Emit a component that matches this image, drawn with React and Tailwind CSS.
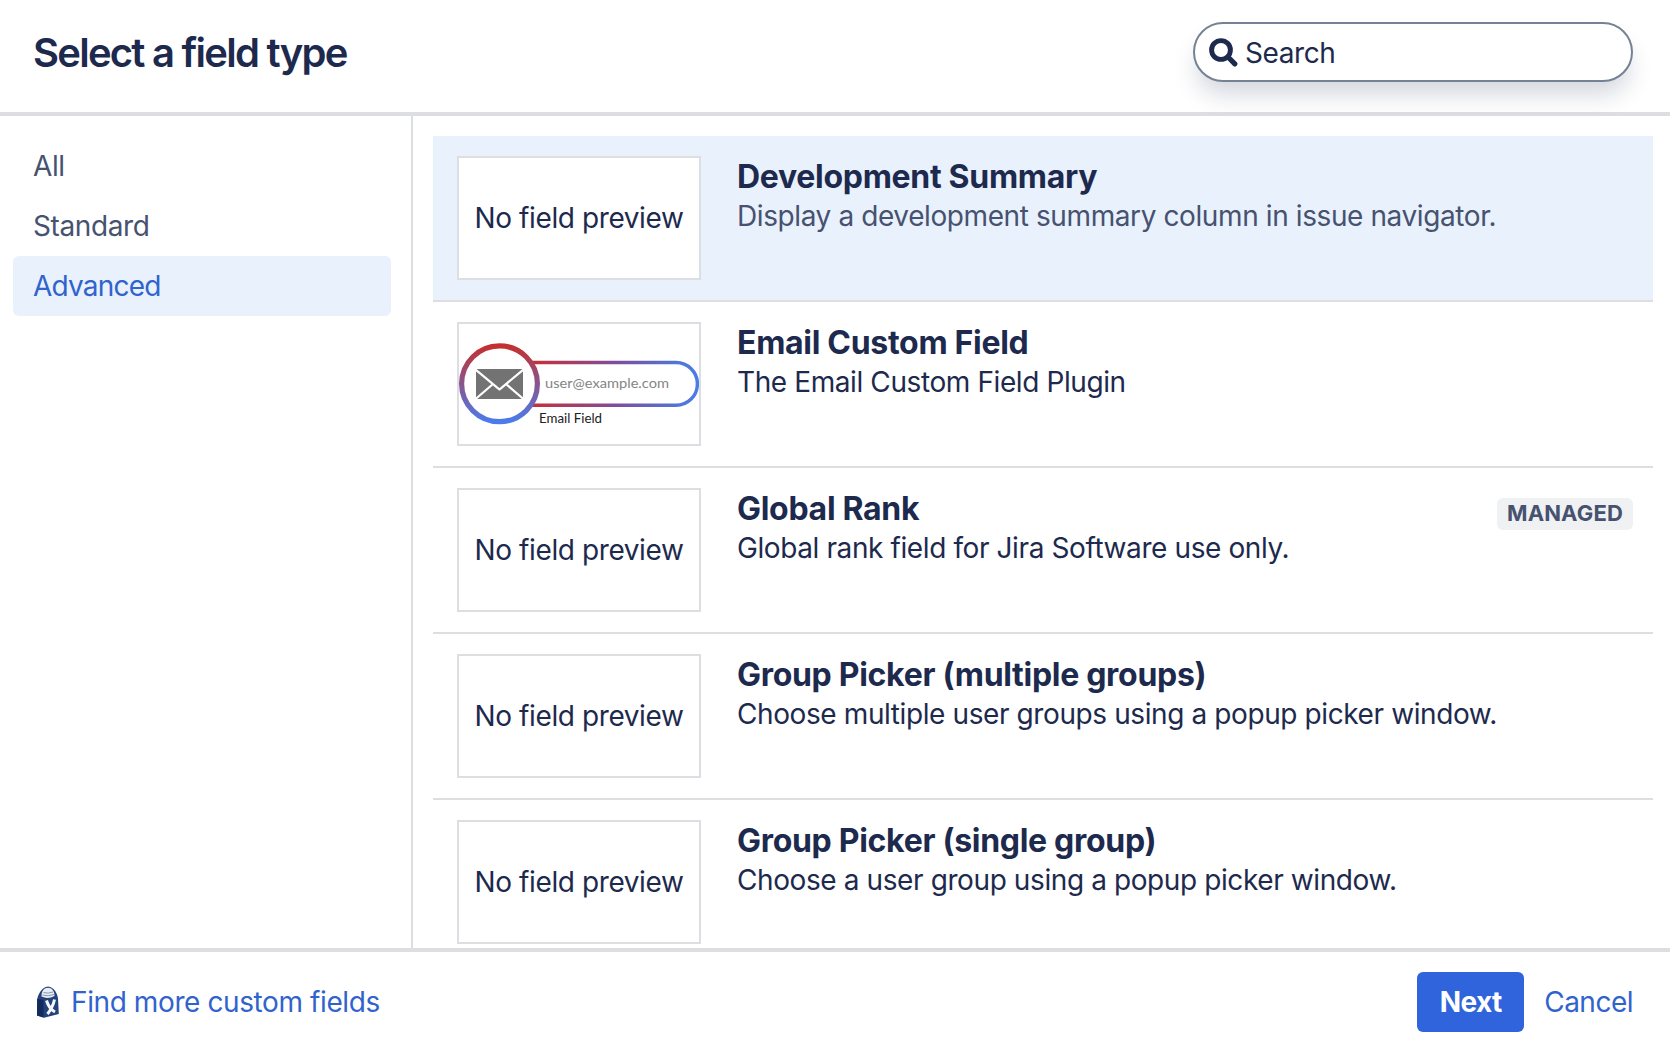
import clsx from "clsx";

const categories = ["All", "Standard", "Advanced"];

const fieldTypes = [
  {
    id: 1,
    name: "Development Summary",
    description: "Display a development summary column in issue navigator.",
    selected: true
  },
  {
    id: 2,
    name: "Email Custom Field",
    description: "The Email Custom Field Plugin",
    preview: "email"
  },
  {
    id: 3,
    name: "Global Rank",
    description: "Global rank field for Jira Software use only.",
    managed: true
  },
  {
    id: 4,
    name: "Group Picker (multiple groups)",
    description: "Choose multiple user groups using a popup picker window."
  },
  {
    id: 5,
    name: "Group Picker (single group)",
    description: "Choose a user group using a popup picker window."
  }
];

function SearchIcon() {
  return (
    <svg className="w-[29px] h-[29px] shrink-0" viewBox="0 0 29 29" fill="none" stroke="#1d2a4d" strokeLinecap="round">
      <circle cx="12" cy="12" r="9.4" strokeWidth="4.9" />
      <path d="M20.5 20.5L25.8 25.8" strokeWidth="5.2" />
    </svg>
  );
}

function MarketplaceIcon() {
  return (
    <svg className="w-6 h-8 shrink-0" viewBox="0 0 24 32">
      <path d="M1.2 13C2 9 4 5.500 6.500 3Q9 .5 12 .5t5.5 2.500C20 5.500 21.600 9 22 12.500L22.800 28 8 31.800 1 29.500z" fill="#24427a" />
      <path d="M1.200 13L7.500 14v17.500L1 29.500z" fill="#122b5c" />
      <path d="M5.500 10.500C5.500 5 8 1.800 12 1.800s6.500 3.200 6.500 8.200q-6.500 3.500-13 .5z" fill="#e9edf4" />
      <path d="M7.500 6.500q4.500 1.500 9.500-.5M6.500 9q5.500 1.800 11.500-.5" fill="none" stroke="#8795b2" strokeWidth="1" />
      <path d="M10.500 14.500c1.500 5 4 9 8.500 11.500M18.500 13.500c-1 5-3.500 10-7 14.500" fill="none" stroke="#f4f6fa" strokeWidth="3" />
    </svg>
  );
}

function EmailPreview() {
  return (
    <svg className="w-60 h-[120px]" viewBox="0 0 240 120">
      <defs>
        <linearGradient id="ring" x1="0" y1="0" x2="0" y2="1">
          <stop offset="0" stopColor="#c5302f" />
          <stop offset="1" stopColor="#4b7bec" />
        </linearGradient>
        <linearGradient id="pill" gradientUnits="userSpaceOnUse" x1="75" y1="0" x2="240" y2="0">
          <stop offset="0" stopColor="#c5303a" />
          <stop offset="0.5" stopColor="#7f4d9c" />
          <stop offset="0.85" stopColor="#5374d2" />
          <stop offset="1" stopColor="#4b7bec" />
        </linearGradient>
      </defs>
      <path d="M70 38.5H217a21.4 21.4 0 0 1 0 42.8H70" fill="none" stroke="url(#pill)" strokeWidth="3.4" />
      <circle cx="40.5" cy="59.8" r="37.9" fill="#fff" stroke="url(#ring)" strokeWidth="5.2" />
      <rect x="17" y="45" width="47" height="30" fill="#737373" />
      <path d="M16 45.2L38.5 63.8l2 1.5 2-1.5L65 45.2M16 75.5L34 60M65 75.5L47 60" fill="none" stroke="#fff" strokeWidth="2.2" />
      <text x="86" y="64.4" fontSize="14" textLength="124" lengthAdjust="spacingAndGlyphs" letterSpacing="0" fill="#858585" fontFamily="Lato, sans-serif">user@example.com</text>
      <text x="80" y="98.8" fontSize="12.5" textLength="63" lengthAdjust="spacingAndGlyphs" letterSpacing="0" fill="#222" fontFamily="Lato, sans-serif">Email Field</text>
    </svg>
  );
}

function FieldRow({ field }) {
  return (
    <li className={clsx("flex h-[166px] shrink-0 border-b-2 border-[#dddee1] pl-6 pr-5 pt-5", field.selected && "bg-[#e9f1fd]")}>
      <div className="flex h-[124px] w-[244px] shrink-0 items-center justify-center border-2 border-[#dddee1] bg-white">
        {field.preview === "email" ? <EmailPreview /> : <span className="whitespace-nowrap">No field preview</span>}
      </div>
      <div className="ml-9 flex-1 whitespace-nowrap">
        <h3 className="pt-px text-[32px] leading-[39px] font-bold tracking-[-0.3px]">{field.name}</h3>
        <p className={clsx("leading-10", field.selected && "text-[#46526f]")}>{field.description}</p>
      </div>
      {field.managed && (
        <span className="mt-2.5 flex h-8 w-[136px] items-center justify-center rounded-md bg-[#f0f1f3] pb-0.5 text-[22px] font-bold tracking-[0.15px] text-[#46526f]">
          MANAGED
        </span>
      )}
    </li>
  );
}

export default function App() {
  return (
    <div className="flex h-[1052px] w-[1670px] flex-col overflow-hidden bg-white font-['Inter',sans-serif] text-[28px] leading-10 tracking-[-0.4px] text-[#1d2a4d]">
      <header className="flex h-[116px] shrink-0 items-start justify-between border-b-4 border-[#dddee1] pl-[33px] pr-[37px] pt-[22px]">
        <h1 className="pt-px text-[40px] leading-[60px] font-semibold tracking-[-1.75px]">Select a field type</h1>
        <div className="flex h-[60px] w-[440px] items-center gap-[7px] rounded-full border-2 border-[#758195] bg-white pl-3.5 shadow-[0_16px_24px_-4px_rgba(9,30,66,0.18)]">
          <SearchIcon />
          <span className="pt-0.5">Search</span>
        </div>
      </header>

      <div className="flex min-h-0 flex-1">
        <nav className="w-[413px] shrink-0 border-r-2 border-[#dddee1] pl-[13px] pr-5 pt-5">
          {categories.map((category) => (
            <div
              key={category}
              className={clsx(
                "flex h-[60px] items-center rounded-md pl-5",
                category === "Advanced" ? "bg-[#e9f1fd] tracking-[-0.8px] text-[#3163cd]" : "text-[#46526f]"
              )}
            >
              {category}
            </div>
          ))}
        </nav>
        <ul className="flex flex-1 flex-col overflow-hidden pl-5 pr-[17px] pt-5">
          {fieldTypes.map((field) => (
            <FieldRow key={field.id} field={field} />
          ))}
        </ul>
      </div>

      <footer className="flex h-[104px] shrink-0 items-center justify-between border-t-4 border-[#dddee1] pl-9 pr-[37px] text-[#3163cd]">
        <a className="flex items-center gap-[11px]">
          <MarketplaceIcon />
          <span>Find more custom fields</span>
        </a>
        <div className="flex items-center gap-5">
          <button className="h-[60px] w-[107px] rounded-md bg-[#2f64dc] font-bold tracking-[-0.6px] text-white">Next</button>
          <button className="tracking-[-0.5px]">Cancel</button>
        </div>
      </footer>
    </div>
  );
}
